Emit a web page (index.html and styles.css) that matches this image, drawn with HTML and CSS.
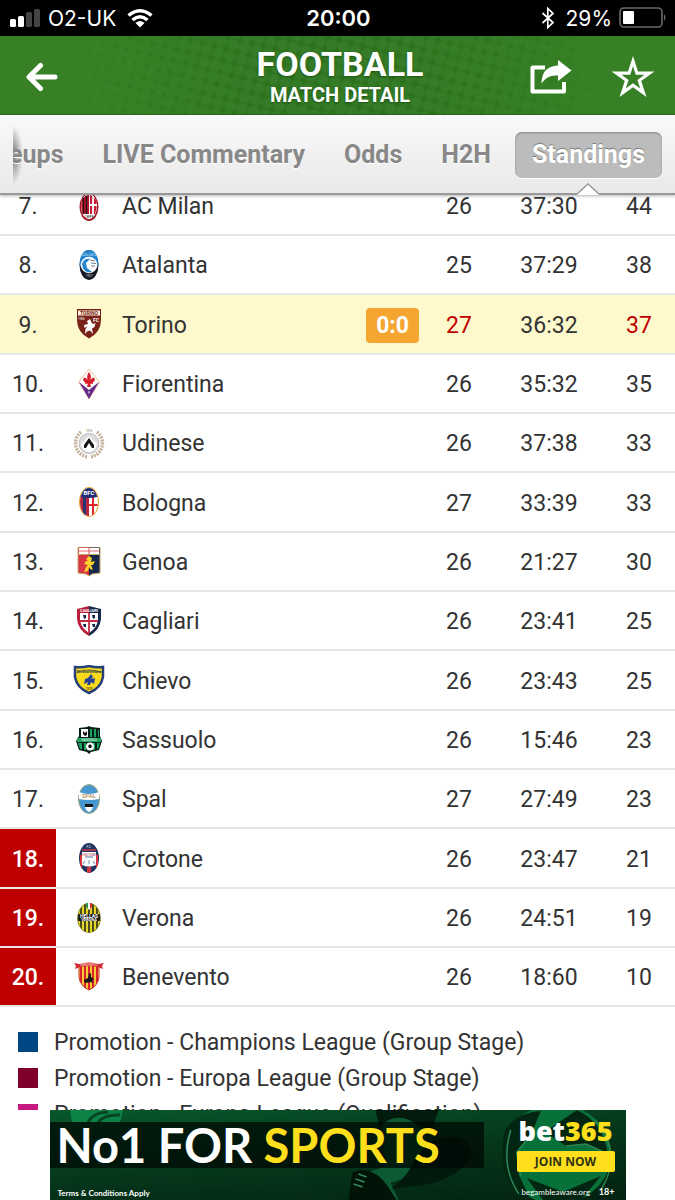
FILE: index.html
```html
<!DOCTYPE html>
<html lang="en">
<head>
	<meta charset="UTF-8">
	<meta name="viewport" content="width=device-width, initial-scale=1.0">
	<title>Football - Match Detail</title>
	<link rel="stylesheet" href="styles.css">
</head>
<body>

<div class="status-bar">
	<div class="status-left">
		<svg class="signal" width="31" height="20" viewBox="0 0 31 20">
			<rect x="0" y="11" width="6" height="8" rx="1.5" fill="#fff"/>
			<rect x="8" y="8" width="6" height="11" rx="1.5" fill="#fff"/>
			<rect x="16" y="4" width="6" height="15" rx="1.5" fill="#444"/>
			<rect x="24" y="1" width="6" height="18" rx="1.5" fill="#444"/>
		</svg>
		<span>O2-UK</span>
		<svg class="wifi" width="26" height="19" viewBox="0 0 26 19">
			<path d="M1.500 6.500Q13-3 24.500 6.500M5.500 11Q13 4.500 20.500 11" fill="none" stroke="#fff" stroke-width="3.4"/>
			<path d="M8.500 14Q13 10 17.500 14L13 18.500Z" fill="#fff"/>
		</svg>
	</div>
	<div class="clock">20:00</div>
	<div class="status-right">
		<svg class="bluetooth" width="14" height="22" viewBox="0 0 14 22">
			<path d="M1.500 6L12 15.500L6.800 20.500V1.500L12 6.500L1.500 16" fill="none" stroke="#fff" stroke-width="1.700"/>
		</svg>
		<span>29%</span>
		<svg width="48" height="22" viewBox="0 0 48 22">
			<rect x="1" y="1" width="42" height="19" rx="4" fill="none" stroke="#6a6a6a" stroke-width="1.600"/>
			<rect x="4" y="4" width="11" height="13" rx="1" fill="#fff"/>
			<path d="M45 7Q48 10.500 45 14Z" fill="#6a6a6a"/>
		</svg>
	</div>
</div>

<header class="header">
	<!-- halftone texture -->
	<svg class="halftone" width="100%" height="100%" aria-hidden="true">
		<defs>
			<pattern id="dots" width="12" height="12" patternUnits="userSpaceOnUse" patternTransform="rotate(14)">
				<path d="M6 3L9 6L6 9L3 6Z" fill="#2a701b"/>
			</pattern>
			<pattern id="mesh" width="12" height="12" patternUnits="userSpaceOnUse" patternTransform="rotate(14)">
				<rect width="12" height="12" fill="#2c701d"/>
				<circle cx="0" cy="0" r="5.500" fill="#35792a"/>
				<circle cx="12" cy="0" r="5.500" fill="#35792a"/>
				<circle cx="0" cy="12" r="5.500" fill="#35792a"/>
				<circle cx="12" cy="12" r="5.500" fill="#35792a"/>
			</pattern>
			<linearGradient id="wide">
				<stop offset="0.050" stop-color="#000"/>
				<stop offset="0.350" stop-color="#999"/>
				<stop offset="0.650" stop-color="#999"/>
				<stop offset="0.950" stop-color="#000"/>
			</linearGradient>
			<linearGradient id="narrow">
				<stop offset="0.200" stop-color="#000"/>
				<stop offset="0.400" stop-color="#bbb"/>
				<stop offset="0.600" stop-color="#bbb"/>
				<stop offset="0.850" stop-color="#000"/>
			</linearGradient>
			<mask id="wideMask"><rect width="100%" height="100%" fill="url(#wide)"/></mask>
			<mask id="narrowMask"><rect width="100%" height="100%" fill="url(#narrow)"/></mask>
		</defs>
		<rect width="100%" height="100%" fill="url(#dots)" mask="url(#wideMask)"/>
		<rect width="100%" height="100%" fill="url(#mesh)" mask="url(#narrowMask)"/>
	</svg>
	<button class="icon-button back" aria-label="Back">
		<svg width="34" height="30" viewBox="0 0 34 30">
			<path d="M15.500 3.500L4 15L15.500 26.500M5 15H30" fill="none" stroke="#fff" stroke-width="5" stroke-linecap="round" stroke-linejoin="round"/>
		</svg>
	</button>
	<div class="titles">
		<h1>FOOTBALL</h1>
		<h2>MATCH DETAIL</h2>
	</div>
	<div class="actions">
		<button class="icon-button" aria-label="Share">
			<svg width="42" height="36" viewBox="0 0 42 36">
				<path d="M15 8.500H2.500V32.500H34V23" fill="none" stroke="#fff" stroke-width="4" stroke-linejoin="round"/>
				<path d="M28 1L41.500 11.500L28 22V16.500Q17 15.500 11.500 24.500Q11.500 7.500 28 6.500Z" fill="#fff"/>
			</svg>
		</button>
		<button class="icon-button" aria-label="Add to favourites">
			<svg width="44" height="44" viewBox="0 0 44 44">
				<path fill-rule="evenodd" d="M22 1L27 16.500H43.500L30.200 26L35.500 42L22 32.200L8.500 42L13.800 26L.5 16.500H17ZM22 11L19.300 19.800H10.500L17.600 25L14.800 33.500L22 28.200L29.200 33.500L26.400 25L33.500 19.800H24.700Z" fill="#fff"/>
			</svg>
		</button>
	</div>
</header>

<nav class="tabs">
	<div class="tab-list">
		<a href="#lineups">Lineups</a>
		<a href="#commentary">LIVE Commentary</a>
		<a href="#odds">Odds</a>
		<a href="#h2h">H2H</a>
		<a href="#standings" class="active" aria-current="page">Standings
			<svg class="pointer" width="26" height="12" viewBox="0 0 26 12">
				<path d="M1 12L13 1L25 12Z" fill="#fff"/>
				<path d="M0 11H2L13 1L24 11H26" fill="none" stroke="#999" stroke-width="1.500"/>
			</svg>
		</a>
	</div>
</nav>

<main class="content" id="standings">
	<table class="standings">
		<tbody>
			<tr>
				<td class="rank">7.</td>
				<td class="crest"><svg viewBox="0 0 32 32">
					<ellipse cx="16" cy="16" rx="9.500" ry="14" fill="#a5182a"/>
					<ellipse cx="16" cy="15.500" rx="8" ry="12.500" fill="#fff"/>
					<path d="M9 9Q12 4 16 4V23H10Q7 16 9 9Z" fill="#b5122b"/>
					<path d="M10.500 7V23M13.500 5V23" stroke="#251318" stroke-width="1.300"/>
					<path d="M17 4Q25 7 23.500 17L22 23H17Z" fill="#c71c36"/>
					<path d="M20 5V23M17 14H24" stroke="#fff" stroke-width="1.800"/>
					<text x="16" y="27" font-size="4" text-anchor="middle">1899</text>
				</svg></td>
				<td class="team">AC Milan</td>
				<td class="live"></td>
				<td class="played">26</td>
				<td class="goals">37:30</td>
				<td class="points">44</td>
			</tr>
			<tr>
				<td class="rank">8.</td>
				<td class="crest"><svg viewBox="0 0 32 32">
					<ellipse cx="16" cy="15" rx="9.500" ry="15" fill="#151b24"/>
					<path d="M6.500 16C6.500 6 10 0 16 0S25.500 6 25.500 16L16 20Z" fill="#2585cd"/>
					<circle cx="16" cy="15" r="8.300" fill="#fff"/>
					<path d="M9 14Q11 8 17 9L13 13L14 18L19 22Q10 24 9 14Z" fill="#2585cd"/>
					<path d="M17 10L22 11M18 13L23 13.500M18 16H22" stroke="#76818c" stroke-width="1"/>
					<text x="16" y="6" font-size="3" text-anchor="middle" fill="#b5dcf2">ATALANTA</text>
					<text x="16" y="27" font-size="3" text-anchor="middle" fill="#ddd">1907</text>
				</svg></td>
				<td class="team">Atalanta</td>
				<td class="live"></td>
				<td class="played">25</td>
				<td class="goals">37:29</td>
				<td class="points">38</td>
			</tr>
			<tr class="current">
				<td class="rank">9.</td>
				<td class="crest"><svg viewBox="0 0 32 32">
					<path d="M4 0H28V11Q28 23 16 29.500Q4 23 4 11Z" fill="#782117"/>
					<path d="M5 1.500H27V6.500H5Z" fill="#fff3dd"/>
					<path d="M14 12L17 10L18.500 13.500L20 15L22.500 14L21.500 18L19 19.500L20 25L17 21.500L14 22.500L12 25L12.500 20L14.500 17L11.500 19L11 16L15 15Z" fill="#fff"/>
					<text x="16" y="6" font-size="5" font-weight="bold" text-anchor="middle" fill="#782117">TORINO</text>
					<text x="5" y="11" font-size="3" fill="#fff">1906</text>
					<text x="20" y="13" font-size="5" font-weight="bold" fill="#fff">FC</text>
				</svg></td>
				<td class="team">Torino</td>
				<td class="live"><span class="score">0:0</span></td>
				<td class="played">27</td>
				<td class="goals">36:32</td>
				<td class="points">37</td>
			</tr>
			<tr>
				<td class="rank">10.</td>
				<td class="crest"><svg viewBox="0 0 32 32">
					<path d="M16 0L26.500 13L16 30L5.500 13Z" fill="#fff" stroke="#efc29c" stroke-width="1"/>
					<path d="M6 13L16 21L26 13L16 30Z" fill="#64298a"/>
					<path d="M16 3Q19 7 17.300 11Q21 6 22 11Q21 13 19 14L17 14L18 18H14L15 14L13 14Q11 13 10 11Q11 6 14.700 11Q13 7 16 3Z" fill="#d81e2a"/>
					<path d="M12 14H20" stroke="#d81e2a" stroke-width="1.500"/>
					<text x="16" y="25" font-size="4" text-anchor="middle" fill="#fff">F</text>
				</svg></td>
				<td class="team">Fiorentina</td>
				<td class="live"></td>
				<td class="played">26</td>
				<td class="goals">35:32</td>
				<td class="points">35</td>
			</tr>
			<tr>
				<td class="rank">11.</td>
				<td class="crest"><svg viewBox="0 0 32 32">
					<path d="M8 4A14 14 0 0 0 15 29M24 4A14 14 0 0 1 17 29" fill="none" stroke="#c4b29a" stroke-width="3.500" stroke-dasharray="2 1"/>
					<circle cx="16" cy="15.500" r="10" fill="#ddd" stroke="#bbb" stroke-width="1"/>
					<path d="M8 16L16 8L24 16Q22 24 16 24Q10 24 8 16Z" fill="#fff"/>
					<path d="M16 10L21 17V20H19L16 15L13 20H11V17Z" fill="#171717"/>
					<text x="16" y="4" font-size="3" text-anchor="middle" fill="#968775">1896</text>
				</svg></td>
				<td class="team">Udinese</td>
				<td class="live"></td>
				<td class="played">26</td>
				<td class="goals">37:38</td>
				<td class="points">33</td>
			</tr>
			<tr>
				<td class="rank">12.</td>
				<td class="crest"><svg viewBox="0 0 32 32">
					<clipPath id="bolognaClip"><ellipse cx="16" cy="15" rx="9" ry="14"/></clipPath>
					<ellipse cx="16" cy="15" rx="10" ry="15" fill="#e9a52e"/>
					<g clip-path="url(#bolognaClip)">
						<rect width="32" height="32" fill="#fff"/>
						<path d="M5 9H10V31H5ZM13 9H16V31H13Z" fill="#ba2441"/>
						<path d="M10 9H13V31H10Z" fill="#263577"/>
						<path d="M20 9V31M16 18H27" stroke="#df2528" stroke-width="2"/>
						<path d="M5 0H27V9Q16 13 5 9Z" fill="#202e78"/>
					</g>
					<text x="16" y="8" font-size="6" font-weight="bold" text-anchor="middle" fill="#fff">BFC</text>
				</svg></td>
				<td class="team">Bologna</td>
				<td class="live"></td>
				<td class="played">27</td>
				<td class="goals">33:39</td>
				<td class="points">33</td>
			</tr>
			<tr>
				<td class="rank">13.</td>
				<td class="crest"><svg viewBox="0 0 32 32">
					<path d="M5 0H16V29L13 27L5 26Z" fill="#d83643"/>
					<path d="M16 0H27V26L19 27L16 29Z" fill="#15284c"/>
					<path d="M6 1H26V7H6Z" fill="#fff"/>
					<path d="M6 4H26M16 1V7" stroke="#e16972" stroke-width="1.200"/>
					<path d="M5 0H27V26L19 27L16 29L13 27L5 26ZM5 7.500H27" fill="none" stroke="#c8a564" stroke-width="1"/>
					<path d="M16 9L19 11L18 15L22 14L20 18L18 18L20 23L17 22L16 20L15 24L11 25L13 20L15 18L11 17L13 14L15 14L13 12Z" fill="#fbd12b"/>
				</svg></td>
				<td class="team">Genoa</td>
				<td class="live"></td>
				<td class="played">26</td>
				<td class="goals">21:27</td>
				<td class="points">30</td>
			</tr>
			<tr>
				<td class="rank">14.</td>
				<td class="crest"><svg viewBox="0 0 32 32">
					<path d="M16 0L28 3V13Q27 24 16 30V0Z" fill="#142a4d"/>
					<path d="M16 0L4 3V13Q5 24 16 30V0Z" fill="#b91d3a"/>
					<path d="M7 7H25V14Q24 22 16 27Q8 22 7 14Z" fill="#fff"/>
					<path d="M16 7V27M7 15H25" stroke="#c52a45" stroke-width="1.800"/>
					<path d="M10 9L13 9L13 12L11 13ZM19 9L22 9L22 12L20 13ZM10 18L13 18L13 21L11 21ZM19 18L22 18L22 21L20 21Z" fill="#172746"/>
					<text x="16" y="6" font-size="4" font-weight="bold" text-anchor="middle" fill="#fff">CAGLIARI</text>
				</svg></td>
				<td class="team">Cagliari</td>
				<td class="live"></td>
				<td class="played">26</td>
				<td class="goals">23:41</td>
				<td class="points">25</td>
			</tr>
			<tr>
				<td class="rank">15.</td>
				<td class="crest"><svg viewBox="0 0 32 32">
					<path d="M2 2Q9 3 16 1Q23 3 30 2V12Q28 23 16 28Q4 23 2 12Z" fill="#fadb1b" stroke="#263f77" stroke-width="2.500"/>
					<path d="M4 7Q16 3 28 7" fill="none" stroke="#5d6231" stroke-width="1"/>
					<path d="M18 9L20 12L18 14L22 13L21 19L18 17L17 20L14 20L15 17L11 19L12 14L15 13Z" fill="#263f9a"/>
					<text x="16" y="8" font-size="4" font-weight="bold" text-anchor="middle" fill="#263f57">ChievoVerona</text>
					<text x="16" y="25" font-size="3" text-anchor="middle">1929</text>
				</svg></td>
				<td class="team">Chievo</td>
				<td class="live"></td>
				<td class="played">26</td>
				<td class="goals">23:43</td>
				<td class="points">25</td>
			</tr>
			<tr>
				<td class="rank">16.</td>
				<td class="crest"><svg viewBox="0 0 32 32">
					<path d="M6 3L14 2L16 1L18 2L27 3V11L29 16L26 25L18 27L16 29L14 27L6 25L3 16L6 11Z" fill="#071e18"/>
					<path d="M8 4H15V12H8Z" fill="#f8f8f8"/>
					<path d="M10 6L12 8L14 6V10L12 11L10 9Z" fill="#111"/>
					<path d="M17 4H19V12H17ZM21 4H23V12H21ZM25 5H26V12H25ZM5 18H9V24L7 24ZM11 18H13V25H11ZM20 18H22V25H20ZM24 18H27L25 24H24Z" fill="#19a35e"/>
					<path d="M4 13H28V17H4Z" fill="#1da260"/>
					<circle cx="17" cy="21.500" r="4" fill="#fff"/>
					<path d="M17 19L19 21L18 23H16L15 21Z" fill="#151515"/>
					<text x="16" y="16" font-size="3" text-anchor="middle" fill="#fff">SASSUOLO</text>
				</svg></td>
				<td class="team">Sassuolo</td>
				<td class="live"></td>
				<td class="played">26</td>
				<td class="goals">15:46</td>
				<td class="points">23</td>
			</tr>
			<tr>
				<td class="rank">17.</td>
				<td class="crest"><svg viewBox="0 0 32 32">
					<ellipse cx="16" cy="15" rx="10.500" ry="14.500" fill="#4697d0" stroke="#a6a87e" stroke-width="1"/>
					<path d="M6 8Q16 12 26 8V15Q16 17 6 15Z" fill="#fff"/>
					<path d="M12 20H20V23Q19 27 16 28Q13 27 12 23Z" fill="#fff"/>
					<path d="M12 20H20V23H12Z" fill="#161616"/>
					<text x="16" y="14" font-size="6" text-anchor="middle" fill="#a87430">SPAL</text>
				</svg></td>
				<td class="team">Spal</td>
				<td class="live"></td>
				<td class="played">27</td>
				<td class="goals">27:49</td>
				<td class="points">23</td>
			</tr>
			<tr class="relegation">
				<td class="rank">18.</td>
				<td class="crest"><svg viewBox="0 0 32 32">
					<clipPath id="crotoneClip"><ellipse cx="16" cy="15" rx="10" ry="15"/></clipPath>
					<g clip-path="url(#crotoneClip)">
						<rect width="32" height="32" fill="#21355f"/>
						<path d="M7 12H9V26H7ZM14 24H18V31H14ZM23 12H25V26H23Z" fill="#d4323f"/>
						<path d="M9 9H23V22Q16 25 9 22Z" fill="#fff"/>
						<path d="M12 14H20M12 18L10 21M16 17V21M20 18L22 21" stroke="#8fa4bc" stroke-width="1.300"/>
						<path d="M9 7H23" stroke="#c93a48" stroke-width="1.500"/>
					</g>
					<text x="16" y="5" font-size="3" text-anchor="middle" fill="#fff">F.C.</text>
					<text x="16" y="13" font-size="3" text-anchor="middle" fill="#a82d41">CROTONE</text>
				</svg></td>
				<td class="team">Crotone</td>
				<td class="live"></td>
				<td class="played">26</td>
				<td class="goals">23:47</td>
				<td class="points">21</td>
			</tr>
			<tr class="relegation">
				<td class="rank">19.</td>
				<td class="crest"><svg viewBox="0 0 32 32">
					<clipPath id="veronaClip"><ellipse cx="16" cy="15" rx="11" ry="14.500"/></clipPath>
					<ellipse cx="16" cy="15" rx="11.800" ry="15" fill="#777620"/>
					<g clip-path="url(#veronaClip)">
						<rect width="32" height="32" fill="#e5d52b"/>
						<path d="M8 2V29M12 0V30M16 0V30M20 0V30M24 2V29" stroke="#252716" stroke-width="1.600"/>
						<path d="M4 11H28V18H4Z" fill="#151915"/>
					</g>
					<path d="M13 0H19V4L16 7L13 4Z" fill="#fff"/>
					<path d="M13 0H15V6L13 4Z" fill="#27984b"/>
					<path d="M17 0H19V4L17 6Z" fill="#dc3037"/>
					<text x="16" y="14.500" font-size="5" font-weight="bold" text-anchor="middle" fill="#fff">HELLAS</text>
					<text x="16" y="18" font-size="4" font-weight="bold" text-anchor="middle" fill="#fff">VERONA</text>
				</svg></td>
				<td class="team">Verona</td>
				<td class="live"></td>
				<td class="played">26</td>
				<td class="goals">24:51</td>
				<td class="points">19</td>
			</tr>
			<tr class="relegation">
				<td class="rank">20.</td>
				<td class="crest"><svg viewBox="0 0 32 32">
					<clipPath id="beneventoClip"><path d="M6 3H26V15Q25 24 16 28Q7 24 6 15Z"/></clipPath>
					<g clip-path="url(#beneventoClip)">
						<rect width="32" height="32" fill="#f6c937"/>
						<path d="M8 3V29M12 3V29M16 3V29M20 3V29M24 3V29" stroke="#d9222b" stroke-width="2"/>
					</g>
					<path d="M6 3V15Q7 24 16 28Q25 24 26 15V3" fill="none" stroke="#c82b2d" stroke-width="1"/>
					<path d="M1 1L6 2Q16-1 26 2L31 1L29 4L30 7L25 5Q16 3 7 5L2 7L3 4Z" fill="#d12935"/>
					<path d="M16 12L18 11L18 15L21 17L19 19L21 21L17 20L12 21L11 18L15 16Z" fill="#161616"/>
					<text x="16" y="4" font-size="3" text-anchor="middle" fill="#ffe1cf">BENEVENTO</text>
				</svg></td>
				<td class="team">Benevento</td>
				<td class="live"></td>
				<td class="played">26</td>
				<td class="goals">18:60</td>
				<td class="points">10</td>
			</tr>
		</tbody>
	</table>
	<ul class="legend">
		<li><span class="swatch champions"></span>Promotion - Champions League (Group Stage)</li>
		<li><span class="swatch europa"></span>Promotion - Europa League (Group Stage)</li>
		<li><span class="swatch qualification"></span>Promotion - Europa League (Qualification)</li>
	</ul>
</main>

<aside class="ad">
	<!-- grass, player's boot and ball -->
	<svg class="ad-picture" viewBox="0 0 575 90" preserveAspectRatio="none" aria-hidden="true">
		<defs>
			<linearGradient id="grass" x2="0" y2="1">
				<stop offset="0" stop-color="#08582c"/>
				<stop offset="0.500" stop-color="#06421f"/>
				<stop offset="1" stop-color="#043018"/>
			</linearGradient>
			<linearGradient id="shade">
				<stop offset="0" stop-color="#000" stop-opacity="0"/>
				<stop offset="0.550" stop-color="#000" stop-opacity="0.150"/>
				<stop offset="1" stop-color="#000" stop-opacity="0.300"/>
			</linearGradient>
		</defs>
		<rect width="575" height="90" fill="url(#grass)"/>
		<path d="M20 0H73L70 12H22Z" fill="#0c8545"/>
		<path d="M38 12Q44 2 58 2M48 12Q55 4 70 5" fill="none" stroke="#064622" stroke-width="3"/>
		<rect width="575" height="90" fill="url(#shade)"/>
		<path d="M325 0H388L380 24Q352 4 330 25Z" fill="#021b0d"/>
		<path d="M330 16Q340 6 352 8Q370 12 376 28L366 65L340 73L348 90H303L312 64L336 56Z" fill="#0b5a31"/>
		<path d="M302 62Q322 55 337 76L346 90H298Z" fill="#021408"/>
		<path d="M308 64L316 67M305 69L314 72M303 74L312 77" fill="none" stroke="#2f8a5c" stroke-width="1.500"/>
		<path d="M378 33Q418 15 421 48Q403 71 371 75L341 79Q359 64 365 48Z" fill="#021a0d"/>
		<ellipse cx="506" cy="44" rx="54" ry="50" fill="#08713a"/>
		<path d="M454 20Q466 3 490 1L480 25L465 42L468 65L480 90Q443 74 454 20ZM526 0Q552 12 557 44L535 34L515 36L494 22ZM476 68L512 82L550 66L530 90H492Z" fill="#022611"/>
		<path d="M460 20Q449 55 468 84M480 25L466 42L470 66M515 36L535 34L555 43M544 10Q572 43 551 78" fill="none" stroke="#2c8352" stroke-width="1.500"/>
	</svg>
	<div class="ad-main">
		<p class="slogan">No1 FOR <span>SPORTS</span></p>
		<a class="terms" href="#terms">Terms &amp; Conditions Apply</a>
	</div>
	<div class="ad-side">
		<div class="brand">bet<span>365</span></div>
		<button class="join">JOIN NOW</button>
		<div class="gamble"><a href="#aware">begambleaware.org</a><span class="age">18+</span></div>
	</div>
</aside>

</body>
</html>
```
FILE: styles.css
```css
* {
	box-sizing: border-box;
}
body {
	display: flex;
	flex-direction: column;
	height: 100vh;
	margin: 0;
	font-family: Roboto, sans-serif;
	font-size: 23px;
	color: #333;
	background-color: #fff;
	overflow: hidden;
}
a {
	color: inherit;
	text-decoration: none;
}
svg {
	display: block;
}

/* phone status bar */
.status-bar {
	display: grid;
	grid-template-columns: 1fr auto 1fr;
	align-items: center;
	height: 36px;
	flex-shrink: 0;
	padding: 0 8px 0 10px;
	background-color: #000;
	color: #fff;
	font-family: Inter, sans-serif;
	font-size: 21px;
}
.status-left, .status-right {
	display: flex;
	align-items: center;
	gap: 7px;
}
.status-right {
	justify-content: flex-end;
}
.wifi {
	margin-left: 4px;
}
.bluetooth {
	margin-right: 4px;
}
.clock {
	font-size: 22px;
	font-weight: 600;
}

/* green header */
.header {
	position: relative;
	display: grid;
	grid-template-columns: 1fr auto 1fr;
	align-items: center;
	height: 79px;
	flex-shrink: 0;
	padding: 3px 20px 0 25px;
	background-color: #378025;
	border-bottom: 1px solid #2c6b1c;
	color: #fff;
}
.halftone {
	position: absolute;
	top: 0;
	left: 0;
}
.icon-button {
	position: relative;
	padding: 0;
	border: 0;
	background: none;
	cursor: pointer;
}
.back {
	justify-self: start;
}
.titles {
	position: relative;
	text-align: center;
	text-shadow: 0 1px 2px #1d5312;
}
h1, h2 {
	margin: 0;
	font-weight: bold;
}
h1 {
	font-size: 34px;
	line-height: 36px;
}
h2 {
	font-size: 20px;
	line-height: 26px;
}
.actions {
	display: flex;
	align-items: center;
	justify-content: flex-end;
	gap: 39px;
}

/* tabs */
.tabs {
	position: relative;
	z-index: 1;
	height: 80px;
	flex-shrink: 0;
	padding-left: 13px;
	background: linear-gradient(#f9f9f9, #e9e9e9);
	border-bottom: 2px solid #999;
	box-shadow: 0 1px 3px rgba(0, 0, 0, 0.3);
}
.tab-list {
	display: flex;
	align-items: center;
	justify-content: flex-end;
	gap: 9px;
	height: 80px;
	padding-right: 13px;
	overflow: hidden;
	background: radial-gradient(ellipse at left, rgba(0, 0, 0, 0.5), transparent 70%) no-repeat 0 10px / 10px 60px;
}
.tab-list a {
	padding: 0 15px;
	font-size: 25px;
	font-weight: bold;
	line-height: 46px;
	white-space: nowrap;
	color: #888;
	text-shadow: 0 1px 0 #fff;
}
.tab-list .active {
	position: relative;
	padding: 0 17px;
	border-radius: 7px;
	background-color: #bcbcbc;
	box-shadow: inset 0 1px 2px #888, 0 1px 0 #fff;
	color: #fff;
	text-shadow: 0 -1px 1px #777;
}
.pointer {
	position: absolute;
	left: 50%;
	bottom: -17px;
	margin-left: -13px;
}

/* standings, scrolled part way under the tabs */
.content {
	flex: 1;
	min-height: 0;
	overflow: hidden;
}
.standings {
	width: 100%;
	margin-top: -18px;
	border-collapse: separate;
	border-spacing: 0;
	table-layout: fixed;
}
.standings td {
	height: 59px;
	padding: 2px 0 0;
	border-bottom: 2px solid #e6e6e6;
	text-align: center;
}
.standings tr:nth-child(3n) td {
	height: 60px;
}
.standings .rank {
	width: 56px;
}
.standings .crest {
	width: 66px;
}
.crest svg {
	width: 32px;
	height: 32px;
	margin: 0 auto;
}
.standings .team {
	text-align: left;
}
.standings .live {
	width: 80px;
	padding-right: 4px;
	text-align: right;
}
.standings .played, .standings .points {
	width: 72px;
}
.standings .goals {
	width: 108px;
}
.current {
	background-color: #fef9cc;
}
.current .played, .current .points {
	color: #c00000;
}
.score {
	display: inline-block;
	padding: 0 10px;
	border-radius: 4px;
	background-color: #f4a630;
	color: #fff;
	font-weight: bold;
	line-height: 35px;
}
.relegation .rank {
	background-color: #bf0000;
	color: #fff;
	font-weight: 500;
}

/* legend */
.legend {
	margin: 0;
	padding: 17px 18px 0;
	list-style: none;
}
.legend li {
	display: flex;
	align-items: center;
	gap: 16px;
	height: 36px;
	white-space: nowrap;
}
.swatch {
	width: 20px;
	height: 20px;
}
.champions {
	background-color: #004682;
}
.europa {
	background-color: #7f0029;
}
.qualification {
	background-color: #c6187e;
}

/* banner ad */
.ad {
	position: relative;
	display: flex;
	justify-content: space-between;
	width: 576px;
	max-width: 100%;
	height: 90px;
	flex-shrink: 0;
	margin: 0 auto;
	overflow: hidden;
	color: #fff;
	font-family: Lato, sans-serif;
}
.ad-picture {
	position: absolute;
	width: 100%;
	height: 100%;
}
.ad-main, .ad-side {
	position: relative;
}
.ad-main {
	padding-top: 12px;
}
.slogan {
	width: 434px;
	margin: 0 0 20px;
	padding-left: 7px;
	background-color: rgba(0, 10, 5, 0.75);
	font-size: 47px;
	font-weight: bold;
	line-height: 46px;
	white-space: nowrap;
}
.slogan span, .brand span {
	color: #ffdf1b;
}
.terms {
	display: block;
	padding-left: 8px;
	font-size: 8px;
	font-weight: bold;
	line-height: 10px;
}
.ad-side {
	width: 98px;
	margin-right: 11px;
	padding-top: 6px;
}
.brand {
	font-family: "Open Sans", sans-serif;
	font-size: 27px;
	font-weight: 800;
	line-height: 30px;
	text-align: center;
}
.join {
	display: block;
	width: 100%;
	height: 21px;
	margin-top: 5px;
	padding: 0;
	border: 0;
	border-radius: 2px;
	background-color: #ffdf1b;
	color: #2f3313;
	font-family: "Open Sans", sans-serif;
	font-size: 12px;
	font-weight: bold;
	cursor: pointer;
}
.gamble {
	display: flex;
	align-items: center;
	justify-content: space-between;
	margin-top: 14px;
	padding-left: 5px;
	font-size: 8px;
	line-height: 12px;
}
.age {
	font-size: 9px;
	font-weight: bold;
}
```
